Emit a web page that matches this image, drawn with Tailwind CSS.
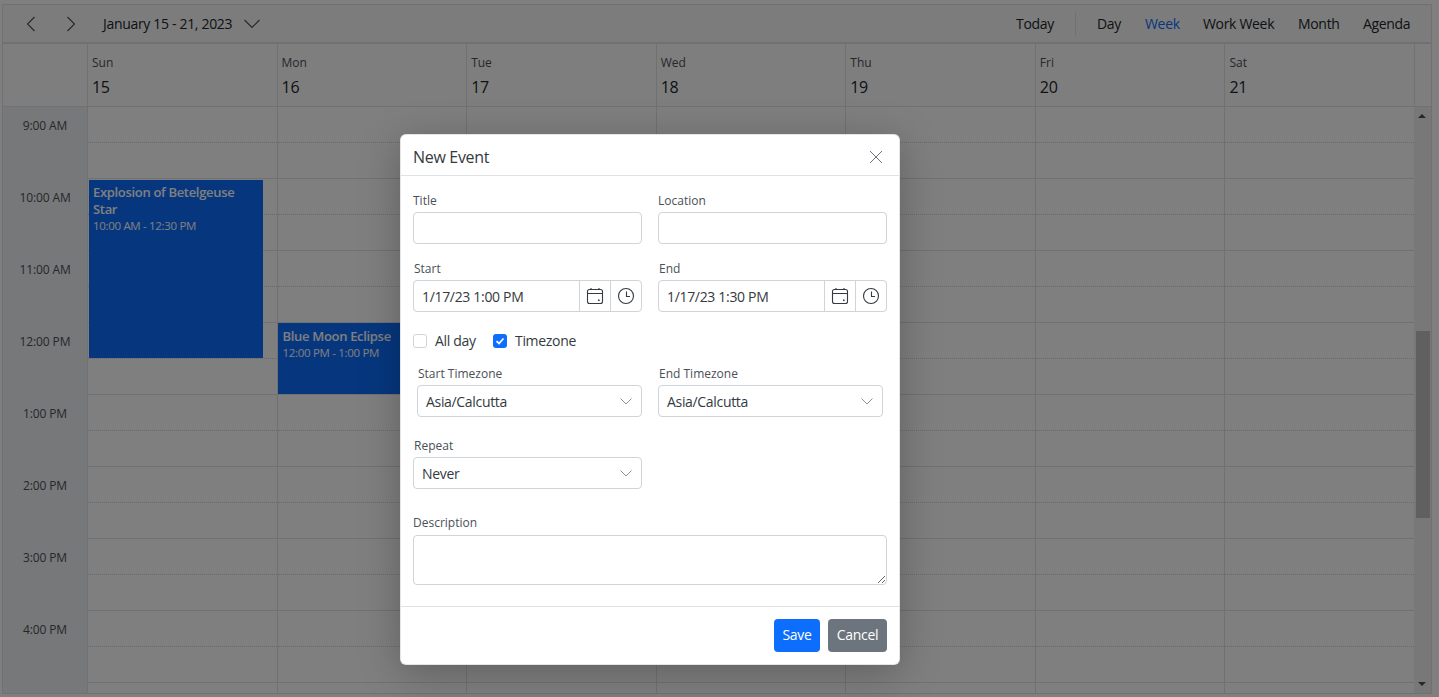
<!DOCTYPE html>
<html lang="en">
<head>
    <meta charset="UTF-8">
    <meta name="viewport" content="width=device-width, initial-scale=1.0">
    <title>Scheduler</title>
    <script src="https://cdn.jsdelivr.net/npm/@tailwindcss/browser@4"></script>
</head>
<body class="bg-white font-['Open_Sans',sans-serif] tracking-[-0.02em] text-[#212529] overflow-hidden">
    <div class="relative h-[697px] w-[1439px] overflow-hidden">

        <!-- Scheduler -->
        <div class="ml-[2px] mt-[4px] flex h-[690px] w-[1430px] flex-col border border-[#dee2e6]">
            <!-- Toolbar -->
            <div class="flex h-[39px] shrink-0 items-center border-b-2 border-[#dee2e6] bg-[#f8f9fa] text-sm">
                <svg class="ml-[20px] h-4 w-4" viewBox="0 0 16 16" fill="none" stroke="#495057" stroke-width="1.1"><path d="M11.5 1 L4.5 8 L11.5 15"/></svg>
                <svg class="ml-[24px] h-4 w-4" viewBox="0 0 16 16" fill="none" stroke="#495057" stroke-width="1.1"><path d="M4.5 1 L11.5 8 L4.5 15"/></svg>
                <span class="ml-[24px] w-[141px]">January 15 - 21, 2023</span>
                <svg class="h-4 w-4" viewBox="0 0 16 16" fill="none" stroke="#495057" stroke-width="1.1"><path d="M0.5 4 L8 11.5 L15.5 4"/></svg>
                <div class="ml-auto flex h-full items-center">
                    <span class="w-[59px]">Today</span>
                    <span class="h-[24px] w-px bg-[#dee2e6]"></span>
                    <span class="ml-[21px] w-[48px]">Day</span>
                    <span class="w-[58px] text-[#0d6efd]">Week</span>
                    <span class="w-[95px]">Work Week</span>
                    <span class="w-[65px]">Month</span>
                    <span class="w-[68px]">Agenda</span>
                </div>
            </div>

            <!-- Day headers -->
            <div class="flex h-[63px] shrink-0 border-b border-[#dee2e6] bg-[#fdfdfd]">
                <div class="w-[84px] shrink-0"></div>
                <div class="grid w-[1328px] grid-cols-7 border-r border-[#dee2e6]" id="headers"></div>
            </div>

            <!-- Body -->
            <div class="flex min-h-0 flex-1 overflow-hidden">
                <div class="w-[84px] shrink-0 bg-[#eef0f2] text-center text-xs tracking-[-0.01em]" id="times"></div>
                <div class="relative grid w-[1327px] shrink-0 grid-cols-7" id="cols"></div>
                <!-- Scrollbar -->
                <div class="relative flex-1 bg-[#f1f1f1]">
                    <div class="absolute left-[4px] top-[7px] h-0 w-0 border-x-[4px] border-b-[4px] border-x-transparent border-b-[#505050]"></div>
                    <div class="absolute left-[2px] top-[224px] h-[187px] w-[14px] bg-[#c1c1c1]"></div>
                    <div class="absolute bottom-[7px] left-[4px] h-0 w-0 border-x-[4px] border-t-[4px] border-x-transparent border-t-[#505050]"></div>
                </div>
            </div>
        </div>

        <!-- Overlay -->
        <div class="absolute inset-0 bg-black/50"></div>

        <!-- Dialog -->
        <div class="absolute left-[400px] top-[134px] flex h-[531px] w-[500px] flex-col rounded-md border border-black/10 bg-white shadow-[0_8px_40px_rgba(0,0,0,0.25)]">
            <div class="flex h-[41px] shrink-0 items-center justify-between border-b border-[#dee2e6] pl-[12px] pr-[16px]">
                <h2 class="mt-[4px] text-base font-medium text-[#343a40]">New Event</h2>
                <svg class="mt-[4px] h-[14px] w-[14px]" viewBox="0 0 14 14" fill="none" stroke="#6c757d" stroke-width="1"><path d="M1 1 L13 13 M13 1 L1 13"/></svg>
            </div>

            <div class="flex-1 px-[12px] pt-[16px] text-sm text-[#343a40]">
                <div class="grid grid-cols-2 gap-x-[16px]">
                    <div>
                        <label class="block h-[18px] text-xs leading-[18px] tracking-normal text-[#495057]">Title</label>
                        <input class="mt-[2px] block h-[32px] w-full rounded border border-[#ced4da]">
                    </div>
                    <div>
                        <label class="block h-[18px] text-xs leading-[18px] tracking-normal text-[#495057]">Location</label>
                        <input class="mt-[2px] block h-[32px] w-full rounded border border-[#ced4da]">
                    </div>
                </div>

                <div class="mt-[16px] grid grid-cols-2 gap-x-[16px]">
                    <div>
                        <label class="ml-px block h-[18px] text-xs leading-[18px] tracking-normal text-[#495057]">Start</label>
                        <div class="mt-[2px] flex h-[32px] items-center rounded border border-[#ced4da]">
                            <span class="flex-1 pl-[8px] pt-[2px]">1/17/23 1:00 PM</span>
                            <span class="flex h-full w-[31px] items-center justify-center border-l border-[#ced4da]">
                                <svg class="h-[18px] w-[18px]" viewBox="0 0 18 18" fill="none" stroke="#343a40" stroke-width="1.1"><rect x="1.5" y="2.5" width="15" height="14" rx="2"/><path d="M1.5 6.5 H16.5 M5 1 V2.5 M13 1 V2.5"/><rect x="12" y="12.5" width="1.6" height="1.6" fill="#343a40" stroke="none"/></svg>
                            </span>
                            <span class="flex h-full w-[31px] items-center justify-center border-l border-[#ced4da]">
                                <svg class="h-[18px] w-[18px]" viewBox="0 0 18 18" fill="none" stroke="#343a40" stroke-width="1.1"><circle cx="9" cy="9" r="7.5"/><path d="M9.5 4.5 V9.5 H13"/></svg>
                            </span>
                        </div>
                    </div>
                    <div>
                        <label class="ml-px block h-[18px] text-xs leading-[18px] tracking-normal text-[#495057]">End</label>
                        <div class="mt-[2px] flex h-[32px] items-center rounded border border-[#ced4da]">
                            <span class="flex-1 pl-[8px] pt-[2px]">1/17/23 1:30 PM</span>
                            <span class="flex h-full w-[31px] items-center justify-center border-l border-[#ced4da]">
                                <svg class="h-[18px] w-[18px]" viewBox="0 0 18 18" fill="none" stroke="#343a40" stroke-width="1.1"><rect x="1.5" y="2.5" width="15" height="14" rx="2"/><path d="M1.5 6.5 H16.5 M5 1 V2.5 M13 1 V2.5"/><rect x="12" y="12.5" width="1.6" height="1.6" fill="#343a40" stroke="none"/></svg>
                            </span>
                            <span class="flex h-full w-[31px] items-center justify-center border-l border-[#ced4da]">
                                <svg class="h-[18px] w-[18px]" viewBox="0 0 18 18" fill="none" stroke="#343a40" stroke-width="1.1"><circle cx="9" cy="9" r="7.5"/><path d="M9.5 4.5 V9.5 H13"/></svg>
                            </span>
                        </div>
                    </div>
                </div>

                <!-- Checkboxes -->
                <div class="mt-[21px] flex h-[16px] items-center">
                    <span class="h-[14px] w-[14px] rounded-[3px] border border-[#ced4da] bg-white"></span>
                    <span class="ml-[8px] w-[58px]">All day</span>
                    <span class="flex h-[14px] w-[14px] items-center justify-center rounded-[3px] bg-[#0d6efd]">
                        <svg class="h-[10px] w-[10px]" viewBox="0 0 10 10" fill="none" stroke="#fff" stroke-width="1.8"><path d="M1.5 5.2 L4 7.5 L8.5 2.5"/></svg>
                    </span>
                    <span class="ml-[8px]">Timezone</span>
                </div>

                <div class="mt-[16px] grid grid-cols-2 gap-x-[16px]">
                    <div class="pl-[4px]">
                        <label class="ml-px block h-[18px] text-xs leading-[18px] tracking-normal text-[#495057]">Start Timezone</label>
                        <div class="mt-[2px] flex h-[32px] items-center justify-between rounded border border-[#ced4da] pl-[8px] pr-[8px]">
                            <span class="pt-[2px]">Asia/Calcutta</span>
                            <svg class="h-[14px] w-[14px]" viewBox="0 0 14 14" fill="none" stroke="#8a929a" stroke-width="1"><path d="M1.5 4.5 L7 10 L12.5 4.5"/></svg>
                        </div>
                    </div>
                    <div class="pr-[4px]">
                        <label class="ml-px block h-[18px] text-xs leading-[18px] tracking-normal text-[#495057]">End Timezone</label>
                        <div class="mt-[2px] flex h-[32px] items-center justify-between rounded border border-[#ced4da] pl-[8px] pr-[8px]">
                            <span class="pt-[2px]">Asia/Calcutta</span>
                            <svg class="h-[14px] w-[14px]" viewBox="0 0 14 14" fill="none" stroke="#8a929a" stroke-width="1"><path d="M1.5 4.5 L7 10 L12.5 4.5"/></svg>
                        </div>
                    </div>
                </div>

                <div class="mt-[20px] grid grid-cols-2 gap-x-[16px]">
                    <div>
                        <label class="ml-px block h-[18px] text-xs leading-[18px] tracking-normal text-[#495057]">Repeat</label>
                        <div class="mt-[2px] flex h-[32px] items-center justify-between rounded border border-[#ced4da] pl-[8px] pr-[8px]">
                            <span class="pt-[2px]">Never</span>
                            <svg class="h-[14px] w-[14px]" viewBox="0 0 14 14" fill="none" stroke="#8a929a" stroke-width="1"><path d="M1.5 4.5 L7 10 L12.5 4.5"/></svg>
                        </div>
                    </div>
                </div>

                <label class="mt-[25px] block h-[18px] text-xs leading-[18px] tracking-normal text-[#495057]">Description</label>
                <textarea class="mt-[3px] block h-[50px] w-full rounded border border-[#ced4da]"></textarea>
            </div>

            <div class="flex h-[58px] shrink-0 items-start justify-end gap-[8px] border-t border-[#dee2e6] pr-[12px] pt-[12px] text-sm text-white">
                <button class="h-[33px] w-[46px] rounded bg-[#0d6efd] pb-[2px]">Save</button>
                <button class="h-[33px] w-[59px] rounded bg-[#6c757d] pb-[2px]">Cancel</button>
            </div>
        </div>
    </div>

    <script>
        const days = [["Sun", 15], ["Mon", 16], ["Tue", 17], ["Wed", 18], ["Thu", 19], ["Fri", 20], ["Sat", 21]];
        const hours = ["9:00 AM", "10:00 AM", "11:00 AM", "12:00 PM", "1:00 PM", "2:00 PM", "3:00 PM", "4:00 PM"];

        document.getElementById("headers").innerHTML = days.map(d =>
            `<div class="border-l border-[#dee2e6] pl-[4px] pt-[10px]"><div class="h-[18px] text-xs leading-[18px] tracking-normal text-[#495057]">${d[0]}</div><div class="mt-[3px] text-base leading-[24px]">${d[1]}</div></div>`
        ).join("");

        document.getElementById("times").innerHTML = hours.map(h =>
            `<div class="h-[72px] pt-[10px] leading-[18px] text-[#495057]">${h}</div>`
        ).join("");

        // one more hour than the labels, the last one is cut off by the scheduler's bottom edge
        const slots = [...hours, ""].map(() =>
            `<div class="h-[36px] border-b border-dotted border-[#ced4da]"></div><div class="h-[36px] border-b border-[#dee2e6]"></div>`
        ).join("");

        document.getElementById("cols").innerHTML = days.map((d, i) => {
            let ev = "";
            if (i == 0) ev = `<div class="absolute left-px top-[73px] h-[178px] w-[174px] bg-[#0d6efd] pl-[4px] pr-[12px] pt-[4px] text-white"><div class="text-[13px] font-semibold leading-[17px]">Explosion of Betelgeuse Star</div><div class="text-[11.5px] leading-[16px]">10:00 AM - 12:30 PM</div></div>`;
            if (i == 1) ev = `<div class="absolute left-0 top-[216px] h-[71px] w-[170px] bg-[#0d6efd] pl-[5px] pt-[5px] text-white"><div class="text-[13px] font-semibold leading-[17px]">Blue Moon Eclipse</div><div class="text-[11.5px] leading-[16px]">12:00 PM - 1:00 PM</div></div>`;
            return `<div class="relative border-l border-[#dee2e6]">${slots}${ev}</div>`;
        }).join("");
    </script>
</body>
</html>
